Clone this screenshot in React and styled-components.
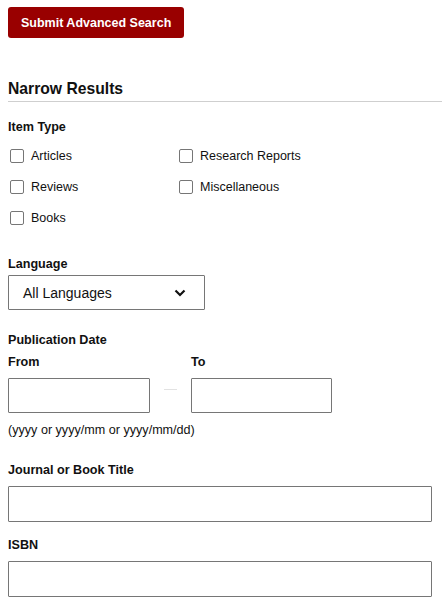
import React from 'react';
import styled, { createGlobalStyle } from 'styled-components';

const GlobalStyle = createGlobalStyle`
  body {
    margin: 0;
    background: #fff;
    font-family: "Liberation Sans", Arial, sans-serif;
    color: #111;
  }
`;

const Page = styled.div`
  width: 442px;
  padding: 7px 0 0 8px;
  box-sizing: border-box;
`;

const SubmitButton = styled.button`
  display: block;
  height: 31px;
  padding: 0 13px;
  border: none;
  border-radius: 3px;
  background: #990000;
  color: #fff;
  font-family: inherit;
  font-size: 12.5px;
  font-weight: 700;
  cursor: pointer;
`;

const SectionTitle = styled.h2`
  margin: 41px 0 0;
  padding-bottom: 2px;
  font-size: 15.7px;
  line-height: 20px;
  font-weight: 700;
  border-bottom: 1px solid #cfcfcf;
`;

const Label = styled.div`
  font-size: 12.6px;
  line-height: 16px;
  font-weight: 700;
  margin-top: ${p => p.$top || 0}px;
  margin-bottom: ${p => p.$bottom || 0}px;
`;

const CheckGrid = styled.div`
  display: grid;
  grid-template-columns: 169px 1fr;
  grid-auto-rows: 31px;
  margin-top: 5px;
  padding-left: 2px;
`;

const CheckItem = styled.label`
  display: flex;
  align-items: center;
  gap: 7px;
  font-size: 12.5px;
  cursor: pointer;
`;

const Box = styled.input.attrs({ type: 'checkbox' })`
  appearance: none;
  margin: 0;
  width: 14px;
  height: 14px;
  border: 1px solid #767676;
  border-radius: 2px;
  background: #fff;
  box-sizing: border-box;
`;

const SelectBox = styled.div`
  width: 197px;
  height: 35px;
  box-sizing: border-box;
  border: 1px solid #767676;
  border-radius: 1px;
  display: flex;
  align-items: center;
  justify-content: space-between;
  padding: 0 18px 0 14px;
  font-size: 14px;
`;

const DateRow = styled.div`
  display: flex;
  align-items: center;
`;

const DateCol = styled.div`
  display: flex;
  flex-direction: column;
`;

const Dash = styled.div`
  width: 13px;
  height: 1px;
  background: #e2e2e2;
  margin: 17px 14px 0;
  align-self: center;
`;

const TextInput = styled.input`
  display: block;
  width: ${p => p.$w}px;
  height: ${p => p.$h || 35}px;
  box-sizing: border-box;
  border: 1px solid #767676;
  border-radius: 1px;
  padding: 0 8px;
  font-family: inherit;
  font-size: 14px;
`;

const Hint = styled.div`
  font-size: 12.6px;
  line-height: 14px;
  margin-top: 10px;
`;

const Chevron = () => (
  <svg width="12" height="8" viewBox="0 0 12 8">
    <path d="M1.5 1.5 6 6l4.5-4.5" fill="none" stroke="#111" strokeWidth="2.2" />
  </svg>
);

export default function App() {
  return (
    <Page>
      <GlobalStyle />
      <SubmitButton>Submit Advanced Search</SubmitButton>
      <SectionTitle>Narrow Results</SectionTitle>

      <Label $top={17}>Item Type</Label>
      <CheckGrid>
        <CheckItem><Box />Articles</CheckItem>
        <CheckItem><Box />Research Reports</CheckItem>
        <CheckItem><Box />Reviews</CheckItem>
        <CheckItem><Box />Miscellaneous</CheckItem>
        <CheckItem><Box />Books</CheckItem>
      </CheckGrid>

      <Label $top={23} $bottom={3}>Language</Label>
      <SelectBox>
        <span>All Languages</span>
        <Chevron />
      </SelectBox>

      <Label $top={22}>Publication Date</Label>
      <DateRow>
        <DateCol>
          <Label $top={6} $bottom={8}>From</Label>
          <TextInput $w={142} />
        </DateCol>
        <Dash />
        <DateCol>
          <Label $top={6} $bottom={8}>To</Label>
          <TextInput $w={141} />
        </DateCol>
      </DateRow>
      <Hint>(yyyy or yyyy/mm or yyyy/mm/dd)</Hint>

      <Label $top={25} $bottom={8}>Journal or Book Title</Label>
      <TextInput $w={424} $h={36} />

      <Label $top={15} $bottom={8}>ISBN</Label>
      <TextInput $w={424} $h={36} />
    </Page>
  );
}
